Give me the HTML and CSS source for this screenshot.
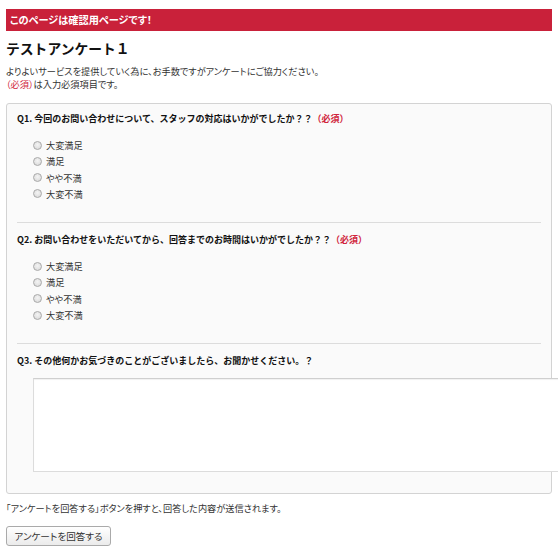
FILE: index.html
```html
<!DOCTYPE html>
<html lang="ja">
<head>
<meta charset="utf-8">
<title>テストアンケート１</title>
<link rel="stylesheet" href="styles.css">
</head>
<body>
<div class="page">
  <div class="banner">このページは確認用ページです！</div>
  <h1 class="title">テストアンケート１</h1>
  <p class="desc">よりよいサービスを提供していく為に、お手数ですがアンケートにご協力ください。<br><span class="req">（必須）</span>は入力必須項目です。</p>

  <form class="box">
    <div class="question">
      <div class="qtitle">Q1. 今回のお問い合わせについて、スタッフの対応はいかがでしたか？？<span class="req">（必須）</span></div>
      <ul class="choices">
        <li><label><input type="radio" name="q1" class="radio">大変満足</label></li>
        <li><label><input type="radio" name="q1" class="radio">満足</label></li>
        <li><label><input type="radio" name="q1" class="radio">やや不満</label></li>
        <li><label><input type="radio" name="q1" class="radio">大変不満</label></li>
      </ul>
    </div>
    <div class="question">
      <div class="qtitle">Q2. お問い合わせをいただいてから、回答までのお時間はいかがでしたか？？<span class="req">（必須）</span></div>
      <ul class="choices">
        <li><label><input type="radio" name="q2" class="radio">大変満足</label></li>
        <li><label><input type="radio" name="q2" class="radio">満足</label></li>
        <li><label><input type="radio" name="q2" class="radio">やや不満</label></li>
        <li><label><input type="radio" name="q2" class="radio">大変不満</label></li>
      </ul>
    </div>
    <div class="question last">
      <div class="qtitle">Q3. その他何かお気づきのことがございましたら、お聞かせください。？</div>
      <textarea class="answer"></textarea>
    </div>
  </form>

  <p class="note">「アンケートを回答する」ボタンを押すと、回答した内容が送信されます。</p>
  <button type="button" class="submit">アンケートを回答する</button>
</div>
</body>
</html>
```

FILE: styles.css
```css
html, body {
  margin: 0;
  padding: 0;
  background: #ffffff;
}

.page {
  padding: 9px 6px 0;
  overflow: hidden;
  font-family: "Noto Sans CJK JP", "Noto Sans", sans-serif;
  font-size: 9.2px;
  font-feature-settings: "palt";
  color: #222;
}

.banner {
  background: #c9213a;
  color: #fff;
  font-weight: bold;
  font-size: 10.2px;
  height: 22px;
  line-height: 22px;
  padding-left: 4px;
}

.title {
  margin: 8px 0 0;
  font-size: 13.8px;
  font-weight: bold;
  line-height: 18px;
  color: #111;
  font-feature-settings: normal;
}

.desc {
  margin: 8px 0 0;
  line-height: 13px;
  color: #333;
}

.req {
  color: #d0243c;
  font-weight: bold;
}

.desc .req {
  font-weight: normal;
}

.box {
  margin-top: 12px;
  background: #fafafa;
  border: 1px solid #d3d3d3;
  border-radius: 3px;
  padding: 0 10px 21px;
}

.question {
  padding-top: 8px;
  padding-bottom: 20px;
  border-bottom: 1px solid #dcdcdc;
}

.question + .question {
  padding-top: 10px;
}

.question.last {
  border-bottom: none;
  padding-bottom: 0;
}

.qtitle {
  font-weight: bold;
  font-size: 9px;
  line-height: 14px;
  color: #111;
  font-feature-settings: normal;
}

.choices {
  list-style: none;
  margin: 11px 0 0;
  padding: 0 0 0 16px;
}

.choices li {
  height: 16.3px;
  line-height: 16px;
}

.choices label {
  display: flex;
  align-items: center;
  color: #333;
}

.radio {
  appearance: none;
  -webkit-appearance: none;
  width: 9px;
  height: 9px;
  margin: 0 4px 0 0;
  border: 1px solid #a9a9a9;
  border-radius: 50%;
  background: radial-gradient(circle at 50% 40%, #f4f4f4 0%, #d6d6d6 100%);
  box-sizing: border-box;
  flex: none;
}

.answer {
  display: block;
  margin: 10px 0 0 16px;
  width: 540px;
  height: 94px;
  box-sizing: border-box;
  border: 1px solid #dcdcdc;
  border-top-color: #cfcfcf;
  box-shadow: inset 0 1px 1px rgba(0,0,0,0.06);
  background: #fff;
  resize: none;
  font: inherit;
}

.note {
  margin: 8px 0 0;
  line-height: 13px;
  color: #333;
}

.submit {
  margin-top: 11px;
  width: 105px;
  height: 20px;
  padding: 0;
  border: 1px solid #aaa;
  border-radius: 3px;
  background: linear-gradient(#ffffff, #ebebeb);
  font-family: "Noto Sans CJK JP", "Noto Sans", sans-serif;
  font-size: 9.6px;
  font-feature-settings: "palt";
  color: #333;
  display: block;
}
```
